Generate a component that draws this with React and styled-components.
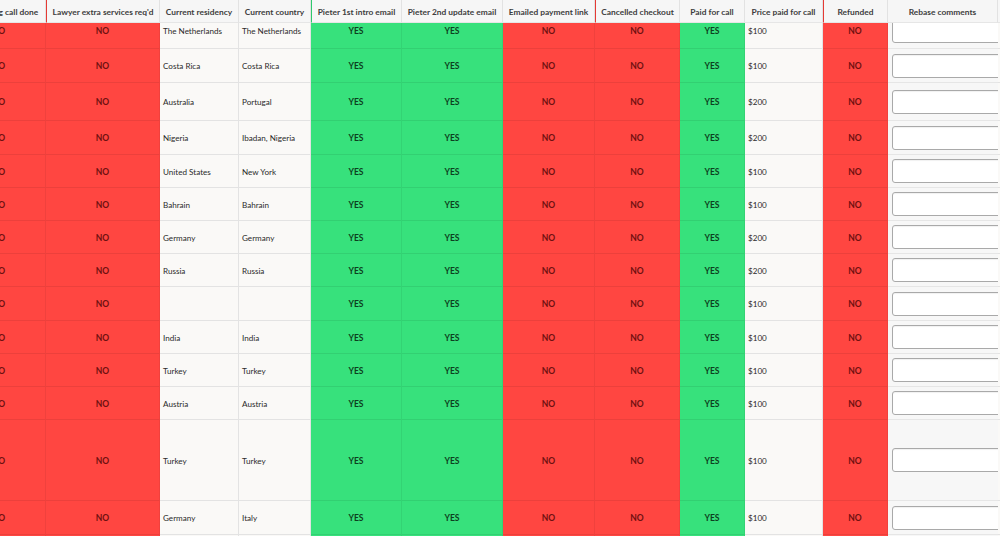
import React, { useLayoutEffect, useRef } from 'react';
import styled, { createGlobalStyle } from 'styled-components';

const GlobalStyle = createGlobalStyle`
  html, body { margin: 0; padding: 0; background: #faf9f7; }
  body { font-family: Lato, "Open Sans", sans-serif; }
`;

// scroll area that holds the sheet
const Viewport = styled.div`
  width: 1000px;
  height: 536px;
  overflow: hidden;
  background: #faf9f7;
`;

const Sheet = styled.table`
  table-layout: fixed;
  border-collapse: separate;
  border-spacing: 0;
  width: 1166px;
  font-size: 8.5px;
  color: #2b2b2b;
`;

const HeadCell = styled.th`
  position: sticky;
  top: 0;
  z-index: 2;
  height: 23px;
  box-sizing: border-box;
  padding: 1px 4px 0;
  background: #f6f6f6;
  color: #3d3d3d;
  font-weight: 700;
  font-size: 8.4px;
  text-align: center;
  white-space: nowrap;
  overflow: hidden;
  border-right: 1px solid #e2e2e2;
  border-bottom: 1px solid #e6e6e6;
  border-left: ${(p) => (p.$edge ? `1px solid ${p.$edge}` : 'none')};
`;

const palette = {
  no: { bg: '#ff4641', fg: '#6e1010' },
  yes: { bg: '#37e17c', fg: '#0d3f20' },
};

const FlagCell = styled.td`
  background: ${(p) => palette[p.$kind].bg};
  color: ${(p) => palette[p.$kind].fg};
  font-weight: 700;
  text-align: center;
  padding: 1px 4px 0;
  border-right: 1px solid rgba(0, 0, 0, 0.06);
  border-bottom: 1px solid rgba(0, 0, 0, 0.07);
  border-left: ${(p) => (p.$edge ? `1px solid ${p.$edge}` : 'none')};
  white-space: nowrap;
`;

const TextCell = styled.td`
  background: #faf9f7;
  padding: 1px 3px 0;
  font-size: 8.1px;
  text-align: left;
  white-space: nowrap;
  overflow: hidden;
  border-right: 1px solid #e3e3e3;
  border-bottom: 1px solid #e3e3e3;
  color: #2a2a2a;
`;

const CommentCell = styled.td`
  background: #f7f7f7;
  padding: 0 4px;
  border-bottom: 1px solid #e6e6e6;
  overflow: visible;
`;

const CommentBox = styled.input`
  display: block;
  box-sizing: border-box;
  width: 150px;
  height: 24px;
  background: #fff;
  border: 1.5px solid #a9a9a9;
  border-radius: 3px;
  box-shadow: inset 0 1px 1px rgba(0, 0, 0, 0.06);
  padding: 0 6px;
  font: inherit;
`;

const Row = styled.tr`
  height: ${(p) => p.$h}px;
`;

const columns = [
  { title: 'Onboarding call done', w: 94 },
  { title: "Lawyer extra services req'd", w: 114, edge: '#e53a34' },
  { title: 'Current residency', w: 79 },
  { title: 'Current country', w: 72 },
  { title: 'Pieter 1st intro email', w: 91, edge: '#2fc96c' },
  { title: 'Pieter 2nd update email', w: 101 },
  { title: 'Emailed payment link', w: 92 },
  { title: 'Cancelled checkout', w: 85, edge: '#e53a34' },
  { title: 'Paid for call', w: 65 },
  { title: 'Price paid for call', w: 78 },
  { title: 'Refunded', w: 65, edge: '#e53a34' },
  { title: 'Rebase comments', w: 110 },
  { title: 'Notes', w: 120 },
];

const rows = [
  { res: 'The Netherlands', country: 'The Netherlands', price: '$100', h: 36 },
  { res: 'Costa Rica', country: 'Costa Rica', price: '$100', h: 34 },
  { res: 'Australia', country: 'Portugal', price: '$200', h: 38 },
  { res: 'Nigeria', country: 'Ibadan, Nigeria', price: '$200', h: 34 },
  { res: 'United States', country: 'New York', price: '$100', h: 33 },
  { res: 'Bahrain', country: 'Bahrain', price: '$100', h: 33 },
  { res: 'Germany', country: 'Germany', price: '$200', h: 33 },
  { res: 'Russia', country: 'Russia', price: '$200', h: 33 },
  { res: '', country: '', price: '$100', h: 34 },
  { res: 'India', country: 'India', price: '$100', h: 33 },
  { res: 'Turkey', country: 'Turkey', price: '$100', h: 33 },
  { res: 'Austria', country: 'Austria', price: '$100', h: 33 },
  { res: 'Turkey', country: 'Turkey', price: '$100', h: 81 },
  { res: 'Germany', country: 'Italy', price: '$100', h: 34 },
  { res: 'Spain', country: 'Spain', price: '$100', h: 34 },
];

const App = () => {
  const viewRef = useRef(null);

  // sheet is scrolled a little to the right and down
  useLayoutEffect(() => {
    if (viewRef.current) {
      viewRef.current.scrollLeft = 48;
      viewRef.current.scrollTop = 10;
    }
  }, []);

  return (
    <>
      <GlobalStyle />
      <Viewport ref={viewRef}>
        <Sheet>
          <colgroup>
            {columns.map((c) => (
              <col key={c.title} style={{ width: c.w }} />
            ))}
          </colgroup>
          <thead>
            <tr>
              {columns.map((c) => (
                <HeadCell key={c.title} $edge={c.edge}>{c.title}</HeadCell>
              ))}
            </tr>
          </thead>
          <tbody>
            {rows.map((r, i) => (
              <Row key={i} $h={r.h}>
                <FlagCell $kind="no">NO</FlagCell>
                <FlagCell $kind="no">NO</FlagCell>
                <TextCell>{r.res}</TextCell>
                <TextCell>{r.country}</TextCell>
                <FlagCell $kind="yes">YES</FlagCell>
                <FlagCell $kind="yes">YES</FlagCell>
                <FlagCell $kind="no">NO</FlagCell>
                <FlagCell $kind="no">NO</FlagCell>
                <FlagCell $kind="yes">YES</FlagCell>
                <TextCell>{r.price}</TextCell>
                <FlagCell $kind="no">NO</FlagCell>
                <CommentCell>
                  <CommentBox type="text" />
                </CommentCell>
                <TextCell />
              </Row>
            ))}
          </tbody>
        </Sheet>
      </Viewport>
    </>
  );
};

export default App;
